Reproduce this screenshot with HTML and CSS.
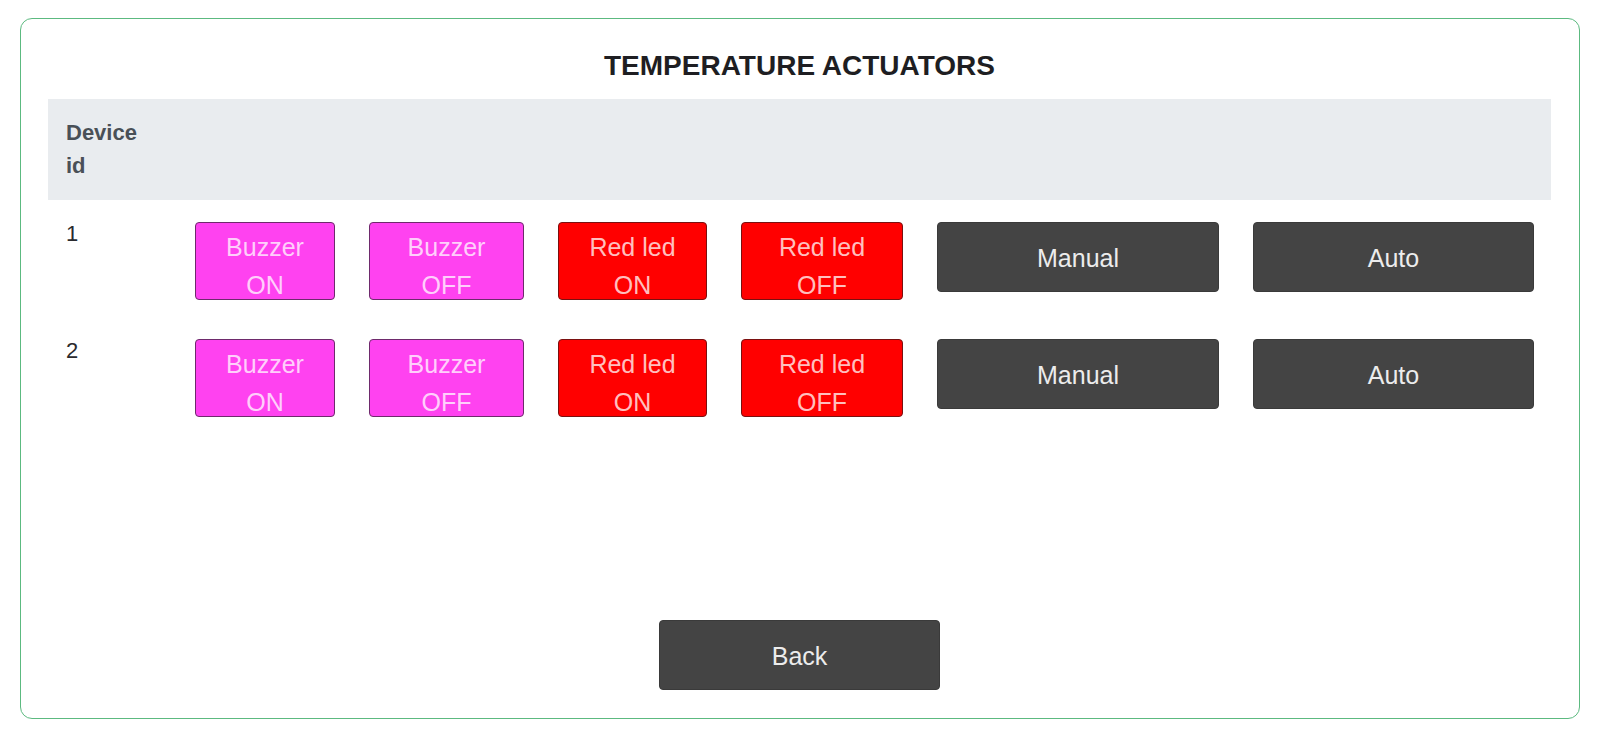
FILE: index.html
```html
<!DOCTYPE html>
<html lang="en">
<head>
<meta charset="utf-8">
<title>Temperature actuators</title>
<link rel="stylesheet" href="styles.css">
</head>
<body>
<main class="card">
  <h1 class="title">TEMPERATURE ACTUATORS</h1>
  <table class="devices">
    <colgroup>
      <col class="c-id"><col class="c-bon"><col class="c-boff"><col class="c-ron"><col class="c-roff"><col class="c-man"><col class="c-auto">
    </colgroup>
    <thead>
      <tr><th>Device id</th><th></th><th></th><th></th><th></th><th></th><th></th></tr>
    </thead>
    <tbody>
      <tr>
        <td class="num">1</td>
        <td><button class="btn btn-buzz">Buzzer<br>ON</button></td>
        <td><button class="btn btn-buzz">Buzzer<br>OFF</button></td>
        <td><button class="btn btn-red">Red led<br>ON</button></td>
        <td><button class="btn btn-red">Red led<br>OFF</button></td>
        <td><button class="btn btn-dark">Manual</button></td>
        <td><button class="btn btn-dark">Auto</button></td>
      </tr>
      <tr>
        <td class="num">2</td>
        <td><button class="btn btn-buzz">Buzzer<br>ON</button></td>
        <td><button class="btn btn-buzz">Buzzer<br>OFF</button></td>
        <td><button class="btn btn-red">Red led<br>ON</button></td>
        <td><button class="btn btn-red">Red led<br>OFF</button></td>
        <td><button class="btn btn-dark">Manual</button></td>
        <td><button class="btn btn-dark">Auto</button></td>
      </tr>
    </tbody>
  </table>
  <div class="footer">
    <button class="btn btn-dark btn-back">Back</button>
  </div>
</main>
</body>
</html>
```
FILE: styles.css
```css
* { box-sizing: border-box; }
html, body { margin: 0; padding: 0; background: #ffffff; }
body {
  font-family: "Liberation Sans", Arial, Helvetica, sans-serif;
  color: #212529;
  height: 739px;
  padding: 18px 18px 20px 20px;
  display: flex;
}
.card {
  flex: 1;
  display: flex;
  flex-direction: column;
  border: 1px solid #5cba80;
  border-radius: 12px;
  background: #ffffff;
  padding: 24px 28px 28px 27px;
}
.title {
  margin: 2px 0 12px;
  text-align: center;
  font-size: 28px;
  line-height: 42px;
  font-weight: 700;
  color: #1e1e22;
}
.devices {
  width: 100%;
  table-layout: fixed;
  border-collapse: collapse;
}
.c-id { width: 130px; }
.c-bon { width: 174px; }
.c-boff { width: 189px; }
.c-ron { width: 183px; }
.c-roff { width: 196px; }
.c-man { width: 316px; }
.c-auto { width: 315px; }
.devices th {
  background: #e9ecef;
  color: #495057;
  font-size: 22px;
  line-height: 33px;
  font-weight: 700;
  text-align: left;
  padding: 17px 17px 18px 18px;
  vertical-align: top;
}
.devices td {
  padding: 17px;
  vertical-align: top;
  font-size: 22px;
  line-height: 33px;
}
.devices td.num { padding-left: 18px; color: #2a2a2e; }
.btn {
  display: block;
  width: 100%;
  margin: 5px 0 0;
  font-family: "Liberation Sans", Arial, Helvetica, sans-serif;
  font-size: 25px;
  border-radius: 4px;
  cursor: pointer;
  text-align: center;
}
.btn-buzz, .btn-red {
  height: 78px;
  padding: 5px 0 0;
  line-height: 38px;
  overflow: visible;
  color: rgba(255, 255, 255, 0.76);
}
.btn-buzz { background: #ff42f0; border: 1px solid #6e2a6c; }
.btn-red { background: #ff0000; border: 1px solid #7a1010; }
.btn-dark {
  height: 70px;
  padding: 0;
  line-height: 70px;
  background: #444444;
  border: 1px solid #3a3a3a;
  color: #ececec;
}
.footer {
  margin-top: auto;
  display: flex;
  justify-content: center;
}
.btn-back {
  width: 281px;
  margin: 0;
}
```
